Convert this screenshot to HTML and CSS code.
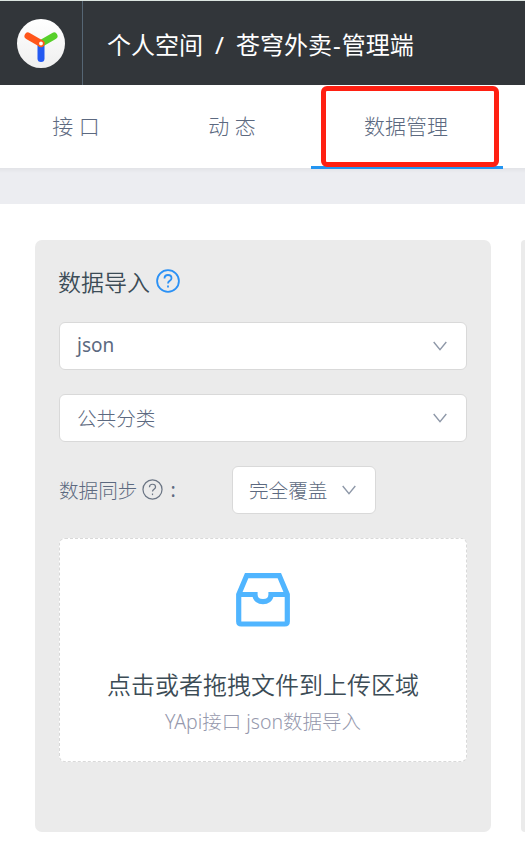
FILE: index.html
```html
<!DOCTYPE html>
<html lang="zh-CN">
<head>
<meta charset="utf-8">
<title>数据管理</title>
<link rel="stylesheet" href="styles.css">
</head>
<body>
<header class="header">
  <div class="brand">
    <svg class="logo" viewBox="0 0 48 49">
      <defs><linearGradient id="disc" x1="0" y1="0" x2="0" y2="1"><stop offset="0" stop-color="#fff"/><stop offset="1" stop-color="#efefef"/></linearGradient></defs>
      <ellipse cx="24" cy="24.5" rx="24" ry="24.5" fill="url(#disc)"/>
      <g fill="none" stroke-width="7" stroke-linecap="round">
        <path d="M24 25V39.5" stroke="#2359f1"/>
        <path d="M24 24.5L37 17" stroke="#57d02a"/>
        <path d="M24 24.5L11 17" stroke="#ff561b"/>
      </g>
      <circle cx="24" cy="24.5" r="2.6" fill="#fff" stroke="#ff561b" stroke-width="1.4"/>
    </svg>
  </div>
  <div class="crumbs"><span>个人空间</span><span class="slash">/</span><span>苍穹外卖<span class="dash">-</span>管理端</span></div>
</header>
<nav class="tabs">
  <a class="tab">接 口</a>
  <a class="tab">动 态</a>
  <a class="tab active">数据管理<span class="marker"></span></a>
</nav>
<div class="band"></div>
<main class="content">
  <section class="panel">
    <h2 class="title">数据导入
      <svg class="help" viewBox="0 0 24 24"><circle cx="12" cy="12" r="10.9"/><path d="M8.5 9.4C8.5 7.3 10 6 12 6s3.5 1.3 3.5 3.2c0 2.6-3.5 2.6-3.5 5.2"/><path d="M12 16.6v1.8"/></svg>
    </h2>
    <div class="select latin">json<svg class="arrow" viewBox="0 0 14 10"><path d="M.7 1L7 8.6 13.3 1"/></svg></div>
    <div class="select">公共分类<svg class="arrow" viewBox="0 0 14 10"><path d="M.7 1L7 8.6 13.3 1"/></svg></div>
    <div class="sync">
      <div class="label">数据同步
        <svg class="help" viewBox="0 0 24 24"><circle cx="12" cy="12" r="10.9"/><path d="M8.5 9.4C8.5 7.3 10 6 12 6s3.5 1.3 3.5 3.2c0 2.6-3.5 2.6-3.5 5.2"/><path d="M12 16.6v1.8"/></svg>
        <span class="colon">:</span>
      </div>
      <div class="select small">完全覆盖<svg class="arrow" viewBox="0 0 14 10"><path d="M.7 1L7 8.6 13.3 1"/></svg></div>
    </div>
    <div class="upload">
      <svg class="inbox" viewBox="0 0 54 54"><path d="M2.7 21.5V48.5Q2.7 51 5.2 51H48.8Q51.3 51 51.3 48.5V21.5L43.3 2.6H10.7ZM2.7 21.5H19C19 31 35 31 35 21.5H51.3"/></svg>
      <p class="lead">点击或者拖拽文件到上传区域</p>
      <p class="hint">YApi接口 json数据导入</p>
    </div>
  </section>
  <section class="panel next"></section>
</main>
</body>
</html>
```
FILE: styles.css
```css
* { box-sizing: border-box; }
body {
  margin: 0;
  height: 847px;
  overflow: hidden;
  background: #fff;
  font-family: "Noto Sans", "Noto Sans CJK SC", sans-serif;
  font-weight: 300;
  color: #5c6980;
}
svg { flex: none; display: block; fill: none; }
.header {
  display: flex;
  height: 85px;
  border-top: 1px solid #dce5e0;
  background: #32363a;
  color: #fff;
}
.brand {
  width: 83px;
  padding: 18px 0 0 17px;
  border-right: 1px solid #566674;
}
.logo { width: 48px; height: 49px; }
.crumbs {
  display: flex;
  padding-left: 24px;
  font-size: 24px;
  font-weight: 400;
  line-height: 87px;
  white-space: nowrap;
}
.slash { width: 33px; text-align: center; }
.dash { margin: 0 1px; }
.tabs {
  display: flex;
  height: 83px;
  margin-left: -2px;
  font-size: 21px;
  line-height: 83px;
}
.tab { width: 156px; text-align: center; flex: none; white-space: nowrap; }
.active {
  position: relative;
  width: 192px;
  margin-left: 1px;
  padding-right: 2px;
  border-bottom: 3px solid #2395f1;
  height: 84px;
}
.marker {
  position: absolute;
  left: 10px;
  top: 1px;
  width: 178px;
  height: 81px;
  border: 5px solid #ff2012;
  border-radius: 6px;
}
.band {
  height: 36px;
  background: linear-gradient(#e2e3e7, #ecedf1 5px);
}
.content { display: flex; gap: 30px; padding: 36px 0 0 35px; }
.panel {
  flex: none;
  width: 456px;
  height: 592px;
  padding: 24px;
  border-radius: 7px;
  background: #ebebeb;
}
.next {
  width: 4px;
  padding: 0;
  border-radius: 7px 0 0 7px;
}
.title {
  display: flex;
  align-items: center;
  gap: 6px;
  height: 35px;
  margin: -1px 0 24px -1px;
  font-size: 23px;
  font-weight: 350;
  color: #3c4c56;
}
.help { width: 24px; height: 24px; stroke: #2b91f5; stroke-width: 1.8; }
.select {
  display: flex;
  align-items: center;
  justify-content: space-between;
  height: 48px;
  margin-bottom: 24px;
  padding: 0 19px 2px 17px;
  border: 1px solid #d9d9d9;
  border-radius: 6px;
  background: #fff;
  font-size: 19.6px;
}
.latin { font-size: 19px; font-weight: 400; }
.arrow { width: 14px; height: 10px; margin-top: 2px; stroke: #8e98a8; stroke-width: 1.4; }
.sync { display: flex; height: 72px; }
.label {
  display: flex;
  align-items: center;
  gap: 5px;
  width: 173px;
  height: 48px;
  padding-bottom: 2px;
  font-size: 19.6px;
}
.label .help { width: 21px; height: 21px; stroke: #6b7584; stroke-width: 1.4; }
.colon { margin-left: 2px; font-weight: 400; }
.small { width: 144px; padding: 0 19px 2px 16px; }
.upload {
  height: 224px;
  padding-top: 34px;
  border: 1px dashed #d9d9d9;
  border-radius: 6px;
  background: #fff;
  text-align: center;
}
.inbox { width: 54px; height: 54px; margin: 0 auto 40px; stroke: #50b5ff; stroke-width: 5.2; }
.lead { margin: 0; font-size: 24px; font-weight: 350; line-height: 36px; color: #3c4c56; }
.hint { margin: 4px 0 0; font-size: 19.5px; line-height: 29px; color: #9699ad; }
```
